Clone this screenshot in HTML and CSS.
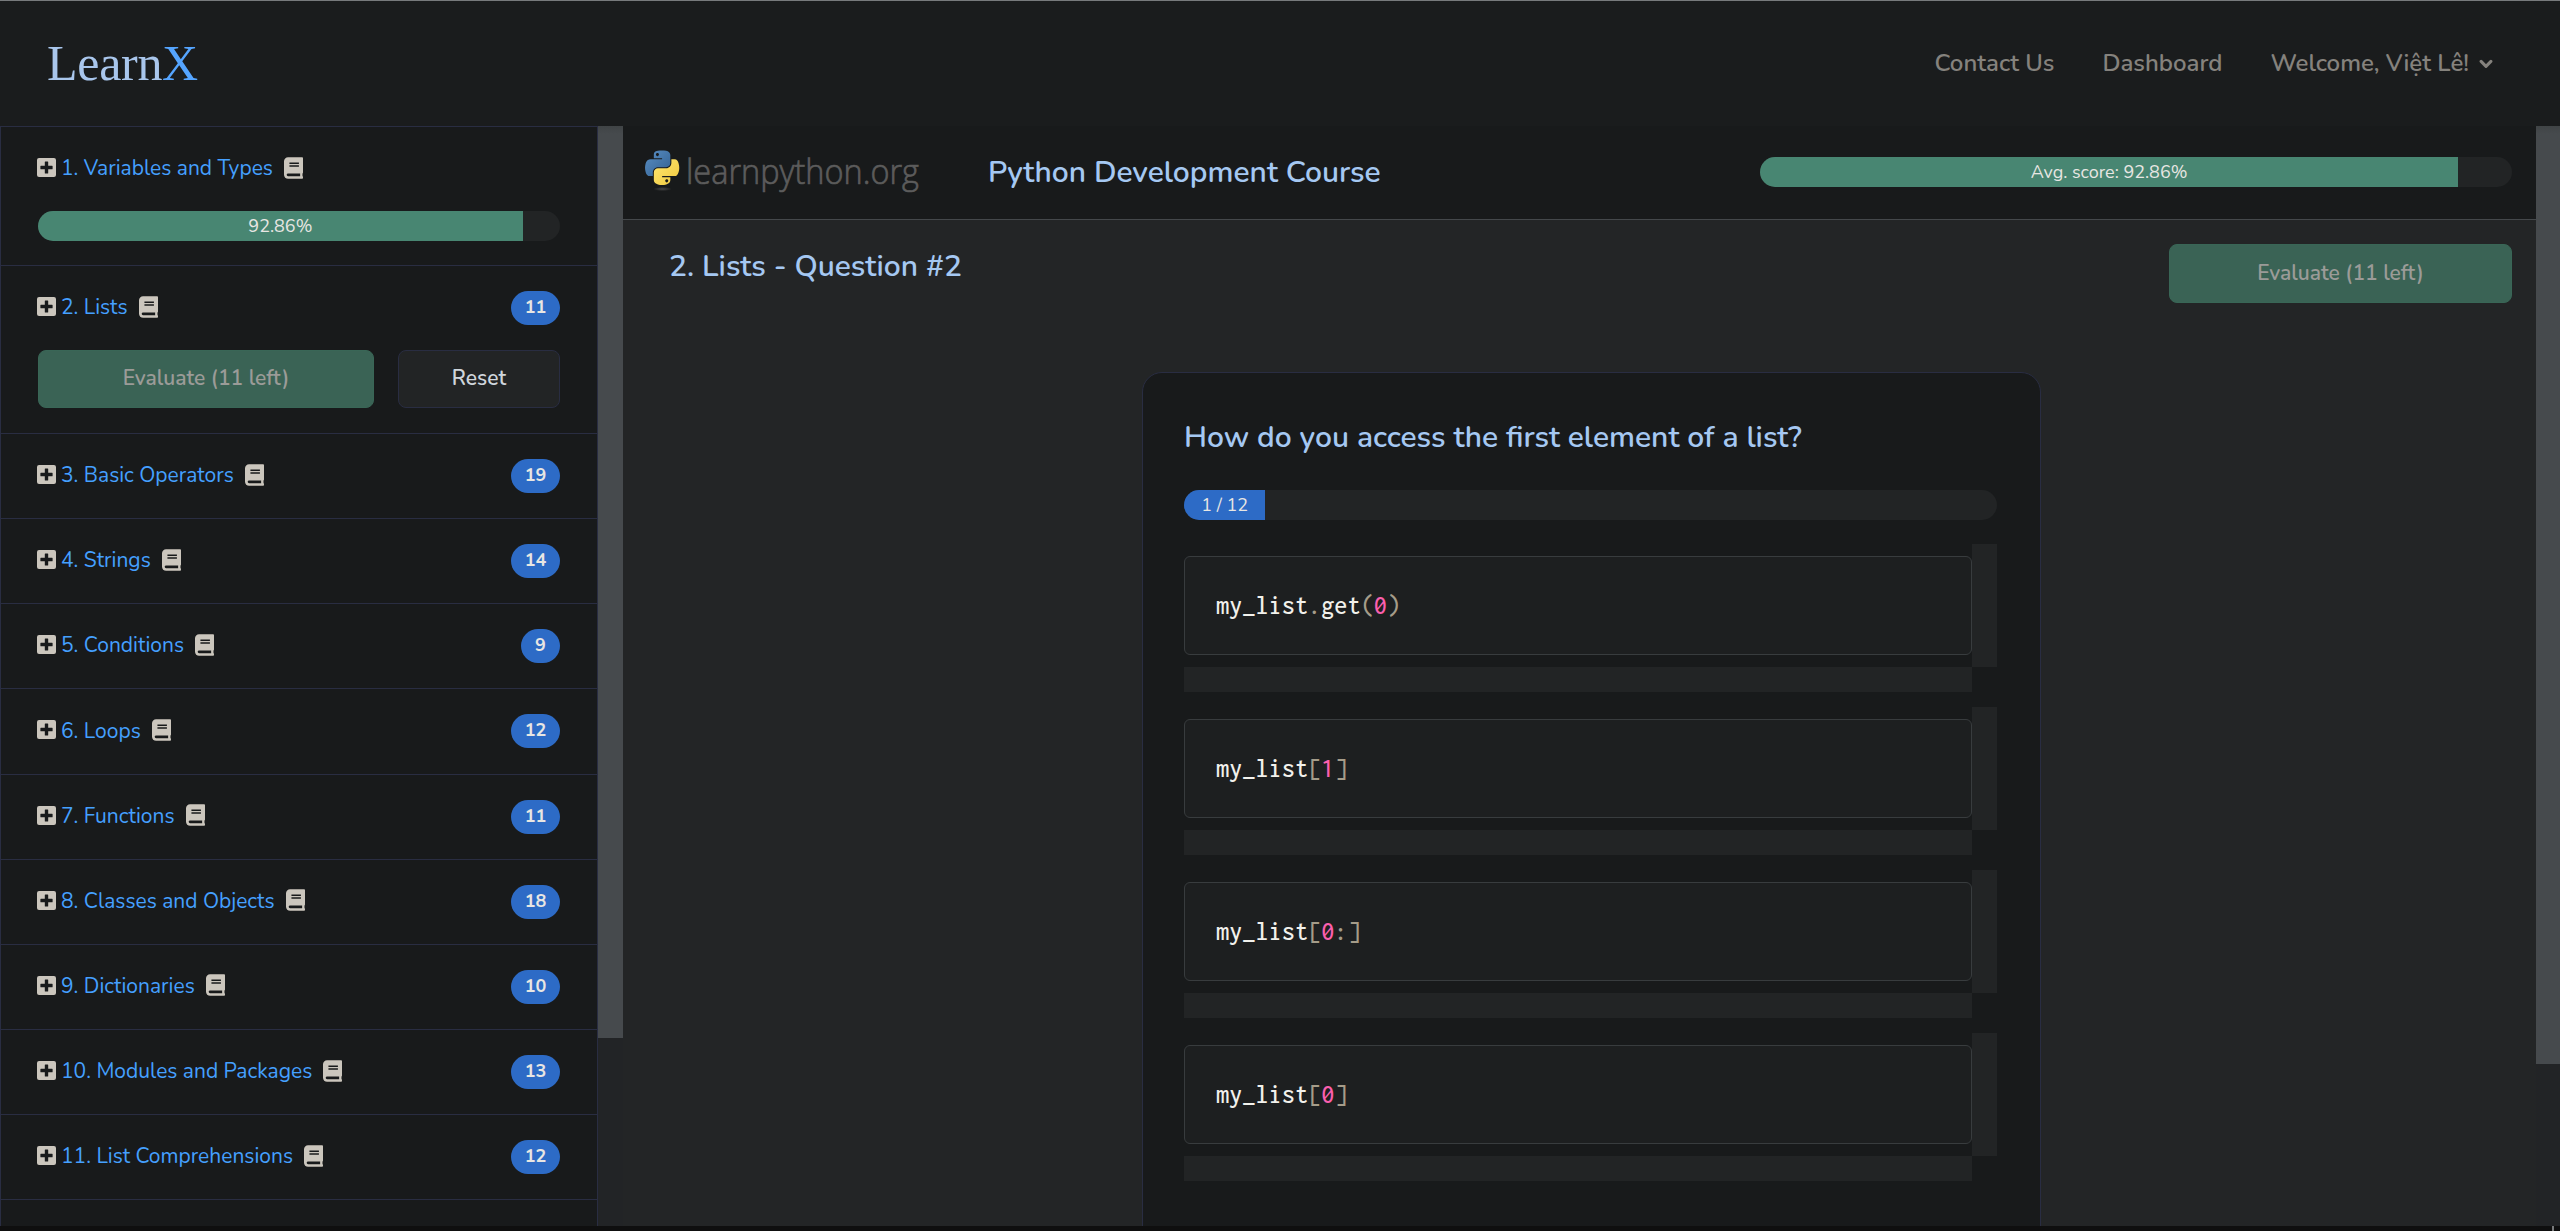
FILE: index.html
```html
<!DOCTYPE html>
<html lang="en">
<head>
<meta charset="utf-8">
<title>LearnX</title>
<link rel="stylesheet" href="styles.css">
</head>
<body>
<svg width="0" height="0" class="defs" aria-hidden="true">
  <symbol id="plus" viewBox="0 0 448 448"><path fill-rule="evenodd" d="M48 0h352a48 48 0 0 1 48 48v352a48 48 0 0 1-48 48H48a48 48 0 0 1-48-48V48A48 48 0 0 1 48 0zM92 184q-12 0-12 12v56q0 12 12 12h92v92q0 12 12 12h56q12 0 12-12v-92h92q12 0 12-12v-56q0-12-12-12h-92V92q0-12-12-12h-56q-12 0-12 12v92z"/></symbol>
  <symbol id="book" viewBox="0 0 448 512"><path fill-rule="evenodd" d="M448 360V24c0-13.300-10.700-24-24-24H96C43 0 0 43 0 96v320c0 53 43 96 96 96h328c13.300 0 24-10.700 24-24v-16c0-7.500-3.500-14.300-8.900-18.700-4.200-15.400-4.200-59.300 0-74.700 5.400-4.300 8.900-11.100 8.900-18.600zM128 134c0-3.300 2.700-6 6-6h212c3.300 0 6 2.700 6 6v20c0 3.300-2.700 6-6 6H134c-3.300 0-6-2.700-6-6v-20zm0 64c0-3.300 2.700-6 6-6h212c3.300 0 6 2.700 6 6v20c0 3.300-2.700 6-6 6H134c-3.300 0-6-2.700-6-6v-20zm253.400 250H96c-17.700 0-32-14.300-32-32 0-17.600 14.400-32 32-32h285.400c-1.900 17.100-1.900 46.900 0 64z"/></symbol>
</svg>

<header class="topbar">
  <a class="brand">Learn<span class="brand-x">X</span></a>
  <nav class="nav">
    <a>Contact Us</a>
    <a>Dashboard</a>
    <a class="nav-user">Welcome, Việt Lê!<svg class="chevron" viewBox="0 0 12 8"><path d="M1.800 1.800 6 6l4.200-4.200"/></svg></a>
  </nav>
</header>

<div class="layout">
  <aside class="sidebar">
    <ul class="topics">
      <li class="topic">
        <div class="topic-row"><svg class="plus"><use href="#plus"/></svg><a class="name">1. Variables and Types</a><svg class="book"><use href="#book"/></svg></div>
        <div class="progress topic-extra"><div class="fill green" style="width:92.86%">92.86%</div></div>
      </li>
      <li class="topic">
        <div class="topic-row"><svg class="plus"><use href="#plus"/></svg><a class="name">2. Lists</a><svg class="book"><use href="#book"/></svg><span class="badge">11</span></div>
        <div class="actions topic-extra"><button class="btn evaluate">Evaluate (11 left)</button><button class="btn reset">Reset</button></div>
      </li>
      <li class="topic"><div class="topic-row"><svg class="plus"><use href="#plus"/></svg><a class="name">3. Basic Operators</a><svg class="book"><use href="#book"/></svg><span class="badge">19</span></div></li>
      <li class="topic"><div class="topic-row"><svg class="plus"><use href="#plus"/></svg><a class="name">4. Strings</a><svg class="book"><use href="#book"/></svg><span class="badge">14</span></div></li>
      <li class="topic"><div class="topic-row"><svg class="plus"><use href="#plus"/></svg><a class="name">5. Conditions</a><svg class="book"><use href="#book"/></svg><span class="badge">9</span></div></li>
      <li class="topic"><div class="topic-row"><svg class="plus"><use href="#plus"/></svg><a class="name">6. Loops</a><svg class="book"><use href="#book"/></svg><span class="badge">12</span></div></li>
      <li class="topic"><div class="topic-row"><svg class="plus"><use href="#plus"/></svg><a class="name">7. Functions</a><svg class="book"><use href="#book"/></svg><span class="badge">11</span></div></li>
      <li class="topic"><div class="topic-row"><svg class="plus"><use href="#plus"/></svg><a class="name">8. Classes and Objects</a><svg class="book"><use href="#book"/></svg><span class="badge">18</span></div></li>
      <li class="topic"><div class="topic-row"><svg class="plus"><use href="#plus"/></svg><a class="name">9. Dictionaries</a><svg class="book"><use href="#book"/></svg><span class="badge">10</span></div></li>
      <li class="topic"><div class="topic-row"><svg class="plus"><use href="#plus"/></svg><a class="name">10. Modules and Packages</a><svg class="book"><use href="#book"/></svg><span class="badge">13</span></div></li>
      <li class="topic"><div class="topic-row"><svg class="plus"><use href="#plus"/></svg><a class="name">11. List Comprehensions</a><svg class="book"><use href="#book"/></svg><span class="badge">12</span></div></li>
    </ul>
    <div class="scroll scroll-side"><div class="thumb"></div></div>
  </aside>

  <main class="main">
    <div class="content">
      <section class="course">
        <svg class="course-logo" viewBox="0 0 280 50" role="img" aria-label="learnpython.org">
          <defs>
            <linearGradient id="blue" x1="0" y1="0" x2="1" y2="1"><stop offset="0" stop-color="#5a8fc4"/><stop offset="1" stop-color="#315f90"/></linearGradient>
            <linearGradient id="yellow" x1="0" y1="0" x2="1" y2="1"><stop offset="0" stop-color="#ffe873"/><stop offset="1" stop-color="#f0c83c"/></linearGradient>
            <radialGradient id="shade"><stop offset="0" stop-color="#484848"/><stop offset="1" stop-color="#1a1c1d"/></radialGradient>
          </defs>
          <ellipse cx="17.500" cy="42" rx="9" ry="2" fill="url(#shade)"/>
          <g transform="translate(0 3.500) scale(.308)">
            <path fill="url(#blue)" d="M54.900 0c-4.600 0-9 .4-12.800 1.100C30.800 3.100 28.700 7.300 28.700 15v10.200h26.800v3.400H18.700c-7.800 0-14.600 4.700-16.700 13.600-2.500 10.200-2.600 16.600 0 27.300 1.900 7.900 6.500 13.600 14.200 13.600h9.200V70.800c0-8.800 7.700-16.700 16.700-16.700h26.700c7.400 0 13.400-6.100 13.400-13.600V15c0-7.300-6.100-12.700-13.400-13.900C64.200.3 59.500 0 54.900 0zM40.400 8.200c2.800 0 5 2.300 5 5.100s-2.200 5.100-5 5.100-5-2.300-5-5.100 2.200-5.100 5-5.100z"/>
            <path fill="url(#yellow)" d="M85.600 28.700v11.900c0 9.200-7.800 17-16.700 17H42.100c-7.300 0-13.400 6.300-13.400 13.600v25.500c0 7.300 6.300 11.500 13.400 13.600 8.500 2.500 16.600 2.900 26.800 0 6.700-2 13.400-5.900 13.400-13.600V86.500H55.600v-3.400h40.200c7.800 0 10.700-5.400 13.400-13.600 2.800-8.400 2.700-16.500 0-27.300-1.900-7.700-5.600-13.600-13.400-13.600zM70.600 93.300c2.800 0 5 2.300 5 5.100s-2.200 5.100-5 5.100-5-2.300-5-5.100 2.300-5.100 5-5.100z"/>
          </g>
          <text class="logo-text" x="41" y="36.500" textLength="233" lengthAdjust="spacingAndGlyphs">learnpython.org</text>
        </svg>
        <h1 class="heading course-title">Python Development Course</h1>
        <div class="progress average"><div class="fill green" style="width:92.86%">Avg. score: 92.86%</div></div>
      </section>

      <section class="quiz">
        <div class="quiz-head">
          <h2 class="heading quiz-title">2. Lists - Question #2</h2>
          <button class="btn evaluate">Evaluate (11 left)</button>
        </div>
        <article class="card">
          <h3 class="heading question">How do you access the first element of a list?</h3>
          <div class="progress steps"><div class="fill blue">1 / 12</div></div>
          <div class="option"><pre class="code">my_list<i>.</i>get<i>(</i><b>0</b><i>)</i></pre></div>
          <div class="option"><pre class="code">my_list<i>[</i><b>1</b><i>]</i></pre></div>
          <div class="option"><pre class="code">my_list<i>[</i><b>0</b><i>:]</i></pre></div>
          <div class="option"><pre class="code">my_list<i>[</i><b>0</b><i>]</i></pre></div>
        </article>
      </section>
    </div>
    <div class="scroll scroll-main"><div class="thumb"></div></div>
  </main>
</div>
<footer class="strip"><span class="mark"></span></footer>
</body>
</html>
```
FILE: styles.css
```css
* { box-sizing: border-box; }

body {
  margin: 0;
  height: 1231px;
  overflow: hidden;
  display: flex;
  flex-direction: column;
  background: #181a1b;
  color: #e8e6e3;
  font-family: Nunito, Lato, sans-serif;
  font-size: 21px;
}

ul, h1, h2, h3, pre { margin: 0; padding: 0; }
ul { list-style: none; }
.defs { position: absolute; }

/* Top bar */
.topbar {
  flex: none;
  height: 126px;
  padding: 0 67px 2px 47px;
  display: flex;
  align-items: center;
  justify-content: space-between;
  border-top: 1px solid #777a7c;
  background: #1a1c1d;
}
.brand {
  font: 50px/60px "Liberation Serif", serif;
  letter-spacing: -.3px;
  color: #a9c6ec;
}
.brand-x { color: #55a5ff; }
.nav {
  display: flex;
  gap: 48px;
  color: #85827d;
  font-size: 24px;
  font-weight: 600;
  line-height: 30px;
}
.nav-user { display: flex; align-items: center; }
.chevron {
  width: 14px;
  height: 10px;
  margin: 2px 0 0 10px;
  fill: none;
  stroke: currentColor;
  stroke-width: 2.600;
  stroke-linecap: round;
  stroke-linejoin: round;
}

.layout { flex: none; height: 1100px; display: flex; }

/* Scrollbars */
.scroll { flex: none; background: #222426; }
.thumb { background: linear-gradient(#404446, #464a4d 8px); }
.scroll-side { width: 25px; }
.scroll-side .thumb { height: 912px; }
.scroll-main { width: 24px; }
.scroll-main .thumb { height: 938px; }

/* Sidebar */
.sidebar { flex: none; width: 623px; display: flex; }
.topics {
  flex: 1;
  border: 1px solid #292d42;
  border-bottom: 0;
}
.topic { padding: 25px 37px; border-bottom: 1px solid #292d42; }
.topic:first-child { padding-bottom: 24px; }
.topic-row { height: 34.150px; display: flex; align-items: center; }
.topic:nth-child(-n+2) .topic-row { height: 34px; }
.topic-extra { margin-top: 25px; }
.plus { width: 19px; height: 19px; margin: 0 5px 3px -1px; fill: #cbc6bd; }
.name { color: #45a0ff; line-height: 34px; padding-bottom: 2px; }
.book { width: 19px; height: 22px; margin: 0 0 3px 11px; fill: #cbc6bd; }
.badge {
  height: 34px;
  min-width: 39px;
  padding: 0 14px;
  margin-left: auto;
  border-radius: 17px;
  background: #2d6bc6;
  font-size: 18px;
  letter-spacing: -.2px;
  font-weight: 700;
  line-height: 32px;
}

/* Progress bars */
.progress {
  height: 30px;
  border-radius: 15px;
  background: #222425;
  overflow: hidden;
}
.fill {
  height: 100%;
  font-size: 18px;
  line-height: 30px;
  text-align: center;
}
.green { background: #488672; }
.blue { background: #2d6bc6; }

/* Buttons */
.btn {
  height: 58px;
  border: 1px solid #292d42;
  border-radius: 8px;
  background: #222425;
  color: #cfd5dc;
  font: 600 21px/54px Nunito, Lato, sans-serif;
  padding: 0 0 2px;
}
.evaluate {
  border-color: #396656;
  background: #3a6355;
  color: #9b9b98;
}
.actions { display: flex; gap: 24px; }
.actions .evaluate { width: 336px; }
.actions .reset { flex: 1; }

/* Main column */
.main { flex: 1; display: flex; }
.content { flex: 1; background: #232526; overflow: hidden; }
.course {
  height: 94px;
  padding: 0 24px 2px 22px;
  display: flex;
  align-items: center;
  border-bottom: 1px solid #44484b;
  background: #181a1b;
}
.course-logo { flex: none; width: 280px; height: 50px; overflow: visible; }
.logo-text {
  fill: #5c5c5c;
  stroke: #5c5c5c;
  stroke-width: .700;
  font-family: "Open Sans", sans-serif;
  font-size: 35px;
  font-weight: 300;
}
.heading {
  color: #a5c8f2;
  font-size: 30px;
  font-weight: 600;
  line-height: 35px;
}
.course-title { margin: 2px auto 0 63px; }
.average { width: 752px; }

.quiz { padding: 24px 24px 0 46px; }
.quiz-head { display: flex; justify-content: space-between; align-items: flex-start; height: 59px; }
.quiz-title { margin-top: 5px; }
.quiz-head .evaluate { width: 343px; height: 59px; }

.card {
  width: 899px;
  height: 900px;
  margin: 69px 471px 0 auto;
  padding: 47px 43px 46px 41px;
  border: 1px solid #292d42;
  border-radius: 20px;
  background: #181a1b;
}
.steps { margin: 35px 0 24px; }
.steps .fill { width: 10%; }

/* Answer options with their own scroll tracks */
.option {
  display: grid;
  height: 148px;
  margin-bottom: 15px;
  background:
    linear-gradient(#222425, #222425) right top / 25px 123px no-repeat,
    linear-gradient(#222425, #222425) left bottom / calc(100% - 25px) 25px no-repeat;
  padding: 12px 25px 37px 0;
}
.code {
  padding: 0 31px;
  border: 1px solid #383c3e;
  border-radius: 6px;
  background: #1d1f20;
  color: #f2f1ec;
  font: 500 26.300px/97px Inconsolata, "DejaVu Sans Mono", monospace;
}
.code i { font-style: normal; color: #a59c89; }
.code b { font-weight: 500; color: #fa5fae; }

.strip { flex: none; height: 5px; background: #0f0f0f; display: flex; justify-content: flex-end; }
.mark { width: 2px; margin-right: 6px; background: #77797a; }
```
